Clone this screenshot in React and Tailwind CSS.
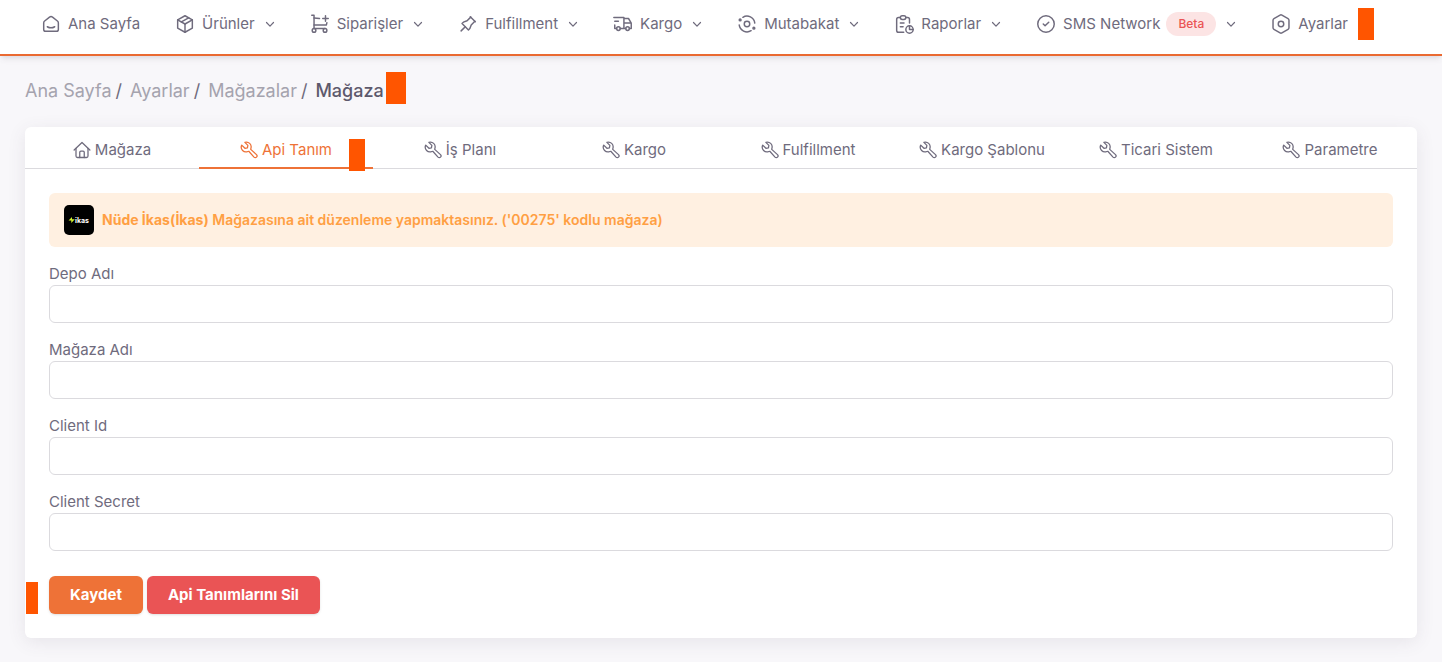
import { TbPackage, TbTruckDelivery, TbPin, TbReport, TbSmartHome, TbCircleCheck } from "react-icons/tb";

const strokeProps = {
  viewBox: "0 0 24 24",
  fill: "none",
  stroke: "currentColor",
  strokeLinecap: "round",
  strokeLinejoin: "round",
  "aria-hidden": true,
};

const CartIcon = ({ className }) => (
  <svg {...strokeProps} className={className}>
    <path d="M3 2.5h2.500V17" />
    <path d="M5.500 5.500l6 .4M5.500 13h13.500l.5-2.500" />
    <path d="M5.500 17h12" />
    <circle cx="5.500" cy="19" r="2" />
    <circle cx="17.500" cy="19" r="2" />
    <path d="M15 6h6M18 3v6" />
  </svg>
);

const SettleIcon = ({ className }) => (
  <svg {...strokeProps} className={className}>
    <circle cx="12" cy="12" r="3" />
    <path d="M20.500 11A8.600 8.600 0 0 0 7.500 4.700M3.500 13a8.600 8.600 0 0 0 13 6.300" />
    <circle cx="4.500" cy="7.500" r="1" />
    <circle cx="19.500" cy="16.500" r="1" />
  </svg>
);

const HexIcon = ({ className }) => (
  <svg {...strokeProps} className={className}>
    <path d="M13 2.300l6.700 3.800a2 2 0 0 1 1 1.700v8.400a2 2 0 0 1-1 1.700L13 21.700a2 2 0 0 1-2 0l-6.700-3.800a2 2 0 0 1-1-1.700V7.800a2 2 0 0 1 1-1.700L11 2.300a2 2 0 0 1 2 0z" />
    <circle cx="12" cy="12" r="3" />
  </svg>
);

const ChevronIcon = ({ className }) => (
  <svg viewBox="0 0 10 10" fill="none" stroke="currentColor" strokeWidth="1.2" className={className} aria-hidden="true">
    <path d="M1.500 3.500L5 7.200l3.500-3.700" strokeLinecap="round" strokeLinejoin="round" />
  </svg>
);

const HouseIcon = ({ className }) => (
  <svg {...strokeProps} strokeWidth="1.7" className={className}>
    <path d="M1.500 12L12 2l10.500 10" />
    <path d="M4 10v10a2 2 0 0 0 2 2h12a2 2 0 0 0 2-2V10" />
    <path d="M9 22v-7a1.500 1.500 0 0 1 1.500-1.500h3A1.500 1.500 0 0 1 15 15v7" />
  </svg>
);

const WrenchIcon = ({ className }) => (
  <svg {...strokeProps} strokeWidth="1.7" className={className}>
    <path d="M6.500 1.800l4 4-.6 3.300-3.300.6-4.300-4.200A6.300 6.300 0 0 0 10.500 14l1.200-.3 7 7.800a2.300 2.300 0 0 0 3.300-3.300l-7.700-7 .3-1.700A6.300 6.300 0 0 0 6.500 1.800z" />
  </svg>
);

const navItems = [
  { label: "Ana Sayfa", Icon: TbSmartHome, plain: true },
  { label: "Ürünler", Icon: TbPackage },
  { label: "Siparişler", Icon: CartIcon },
  { label: "Fulfillment", Icon: TbPin },
  { label: "Kargo", Icon: TbTruckDelivery },
  { label: "Mutabakat", Icon: SettleIcon },
  { label: "Raporlar", Icon: TbReport },
  { label: "SMS Network", Icon: TbCircleCheck, badge: "Beta" },
  { label: "Ayarlar", Icon: HexIcon, plain: true, marked: true },
];

const tabs = [
  { label: "Mağaza", Icon: HouseIcon },
  { label: "Api Tanım", Icon: WrenchIcon, active: true },
  { label: "İş Planı", Icon: WrenchIcon },
  { label: "Kargo", Icon: WrenchIcon },
  { label: "Fulfillment", Icon: WrenchIcon },
  { label: "Kargo Şablonu", Icon: WrenchIcon },
  { label: "Ticari Sistem", Icon: WrenchIcon },
  { label: "Parametre", Icon: WrenchIcon },
];

const crumbs = ["Ana Sayfa", "Ayarlar", "Mağazalar"];

const fields = [
  { id: "depo", label: "Depo Adı" },
  { id: "magaza", label: "Mağaza Adı" },
  { id: "client-id", label: "Client Id" },
  { id: "client-secret", label: "Client Secret" },
];

const Navbar = () => (
  <header className="border-b-2 border-[#ea6a32] bg-white shadow-md shadow-[#4b465c]/10">
    <nav className="flex h-[54px] items-start gap-[34px] px-10 pt-3">
      {navItems.map(({ label, Icon, plain, badge, marked }) => (
        <a key={label} href="#" className="flex h-6 shrink-0 items-center whitespace-nowrap">
          <Icon className="mr-1.5 size-[22px] stroke-[1.6]" />
          {label}
          {badge && (
            <span className="ml-1.5 rounded-full bg-[#fce4e4] px-3 text-xs leading-6 font-medium text-[#ea5455]">
              {badge}
            </span>
          )}
          {!plain && <ChevronIcon className="ml-2.5 size-2.5" />}
          {marked && <span className="ml-2.5 h-8 w-4 bg-[#ff5500]" />}
        </a>
      ))}
    </nav>
  </header>
);

const Breadcrumb = () => (
  <nav className="flex h-8 items-end text-lg leading-[26px] text-[#a5a3ae]">
    {crumbs.map((crumb) => (
      <span key={crumb} className="mr-2 flex gap-1">
        <a href="#">{crumb}</a>
        <span className="text-[#6f6b7d]">/</span>
      </span>
    ))}
    <span className="font-medium text-[#5d596c]">Mağaza</span>
    <span className="ml-0.5 h-8 w-5 bg-[#ff5500]" />
  </nav>
);

const Tabs = () => (
  <div role="tablist" className="flex border-b border-[#dbdade]">
    {tabs.map(({ label, Icon, active }) => (
      <button
        key={label}
        type="button"
        role="tab"
        aria-selected={!!active}
        className={
          active
            ? "relative -mb-px flex h-[42px] flex-1 items-center justify-center gap-1 border-b-2 border-[#ee7237] pt-1.5 text-[#ee7237]"
            : "flex h-[41px] flex-1 items-center justify-center gap-1 pt-1"
        }
      >
        <Icon className="size-[18px]" />
        {label}
        {active && <span className="absolute right-2 -bottom-1 h-8 w-4 bg-[#ff5500]" />}
      </button>
    ))}
  </div>
);

export default function App() {
  return (
    <div className="min-h-screen bg-[#f8f7fa] font-['Inter',sans-serif] text-[15px] leading-6 text-[#6f6b7d]">
      <Navbar />
      <main className="px-[25px] pt-4 pb-6">
        <Breadcrumb />
        <section className="mt-[23px] rounded-md bg-white shadow-[0_4px_18px_rgba(75,70,92,0.1)]">
          <Tabs />
          <form className="relative p-6">
            <div className="flex h-[54px] items-center gap-2 rounded-md bg-[#fff0e1] px-[15px] text-[#ff9f43]">
              <svg viewBox="0 0 30 30" className="size-[30px]" aria-hidden="true">
                <rect width="30" height="30" rx="5" fill="#000" />
                <path d="M4.500 15.500L8 12v2.300h2.800L7.300 18v-2.500z" fill="#d2f32b" />
                <text x="11" y="17.500" fill="#fff" fontSize="7" fontWeight="700">ikas</text>
              </svg>
              <p className="text-sm font-semibold">
                <strong className="font-bold">Nüde İkas(İkas)</strong> Mağazasına ait düzenleme yapmaktasınız.
                (&apos;00275&apos; kodlu mağaza)
              </p>
            </div>
            <div className="mt-4 space-y-4">
              {fields.map(({ id, label }) => (
                <div key={id}>
                  <label htmlFor={id} className="block leading-[22px]">
                    {label}
                  </label>
                  <input
                    id={id}
                    type="text"
                    className="block h-[38px] w-full rounded-md border border-[#dbdade] px-3 outline-none focus:border-[#ee7237]"
                  />
                </div>
              ))}
            </div>
            <div className="mt-[25px] flex gap-1 font-bold text-white">
              <button type="submit" className="h-[38px] rounded-md bg-[#ee7237] px-[21px] shadow-sm">
                Kaydet
              </button>
              <button type="button" className="h-[38px] rounded-md bg-[#ea5455] px-[21px] shadow-sm">
                Api Tanımlarını Sil
              </button>
            </div>
            <span className="absolute bottom-6 left-px h-8 w-3 bg-[#ff5500]" />
          </form>
        </section>
      </main>
    </div>
  );
}
